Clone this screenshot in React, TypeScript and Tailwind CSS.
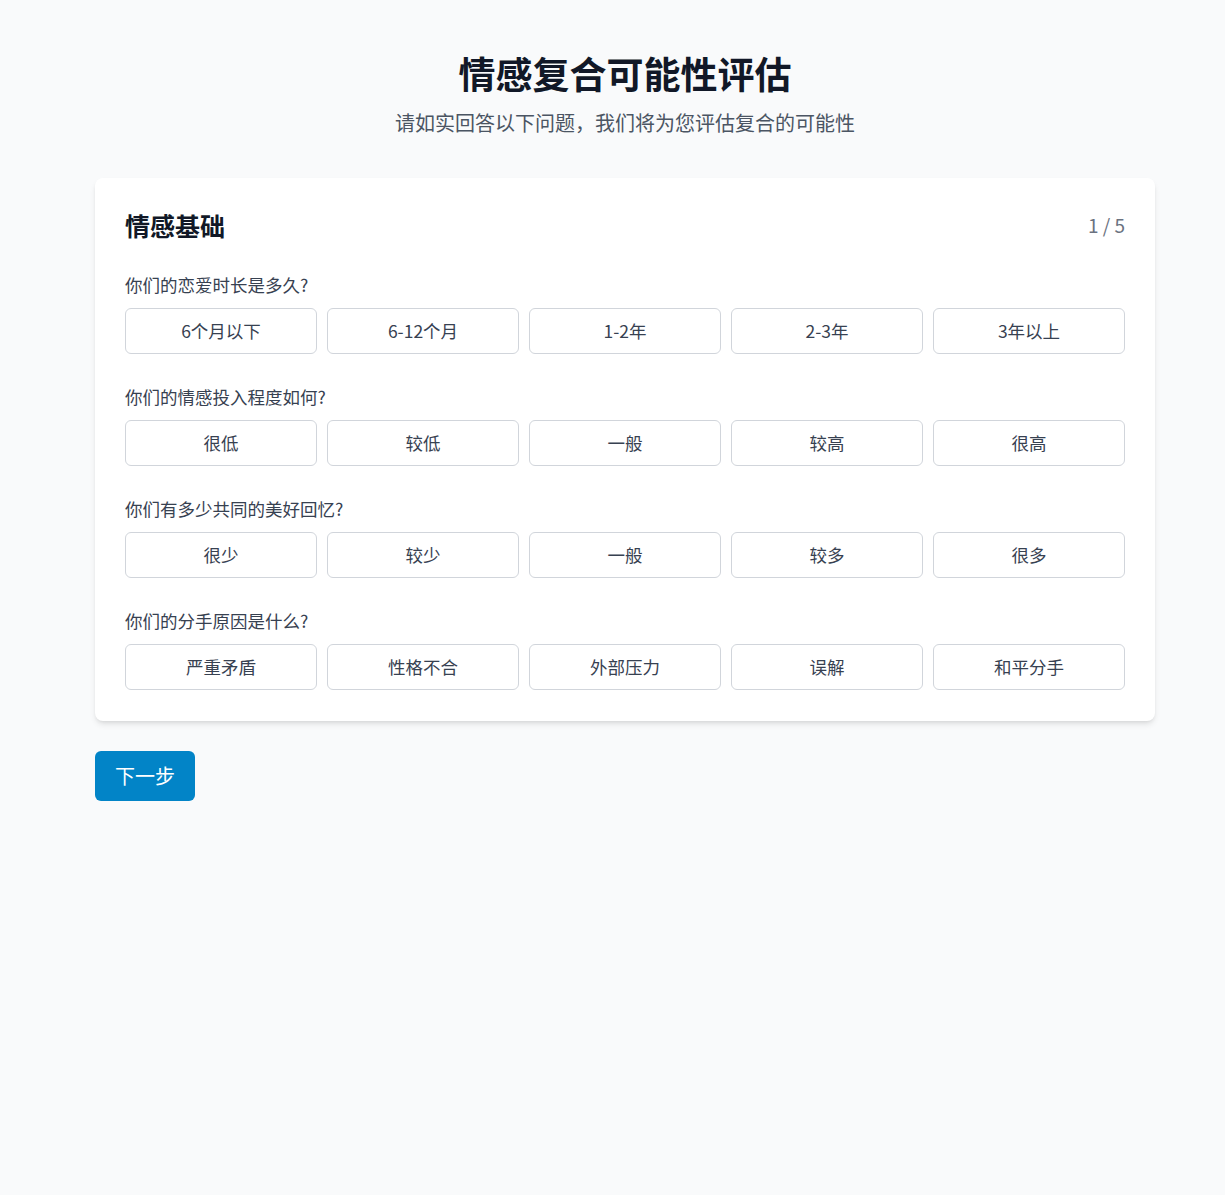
import React from "react";

const questions: { q: string; options: string[] }[] = [
  { q: "你们的恋爱时长是多久?", options: ["6个月以下", "6-12个月", "1-2年", "2-3年", "3年以上"] },
  { q: "你们的情感投入程度如何?", options: ["很低", "较低", "一般", "较高", "很高"] },
  { q: "你们有多少共同的美好回忆?", options: ["很少", "较少", "一般", "较多", "很多"] },
  { q: "你们的分手原因是什么?", options: ["严重矛盾", "性格不合", "外部压力", "误解", "和平分手"] },
];

export default function App() {
  return (
    <div
      className="min-h-[1195px] bg-[#f9fafb] pt-[52px]"
      style={{ fontFamily: '"Noto Sans CJK SC", "Noto Sans", sans-serif' }}
    >
      <div className="ml-[95px] w-[1060px]">
        <h1 className="text-center text-[37px] leading-[42px] font-bold text-[#111827]">情感复合可能性评估</h1>
        <p className="mt-[15px] text-center text-[20px] leading-[28px] text-[#4b5563]">
          请如实回答以下问题，我们将为您评估复合的可能性
        </p>
        <div className="mt-[41px] rounded-lg bg-white p-[30px] pb-[31px] shadow-md">
          <div className="flex items-center justify-between">
            <h2 className="text-[25px] leading-[34px] font-bold text-[#111827]">情感基础</h2>
            <span className="text-[19px] leading-[28px] text-[#6b7280]">1 / 5</span>
          </div>
          <div className="mt-[30px] flex flex-col gap-[30px]">
            {questions.map((item) => (
              <div key={item.q}>
                <div className="mb-[10px] text-[17.5px] leading-[26px] text-[#374151]">{item.q}</div>
                <div className="grid grid-cols-5 gap-[10px]">
                  {item.options.map((o) => (
                    <button
                      key={o}
                      className="h-[46px] rounded-md border border-[#d1d5db] bg-white text-[17.5px] text-[#374151]"
                    >
                      {o}
                    </button>
                  ))}
                </div>
              </div>
            ))}
          </div>
        </div>
        <button className="mt-[30px] h-[50px] w-[100px] rounded-md bg-[#0284c7] text-[20px] text-white">
          下一步
        </button>
      </div>
    </div>
  );
}
